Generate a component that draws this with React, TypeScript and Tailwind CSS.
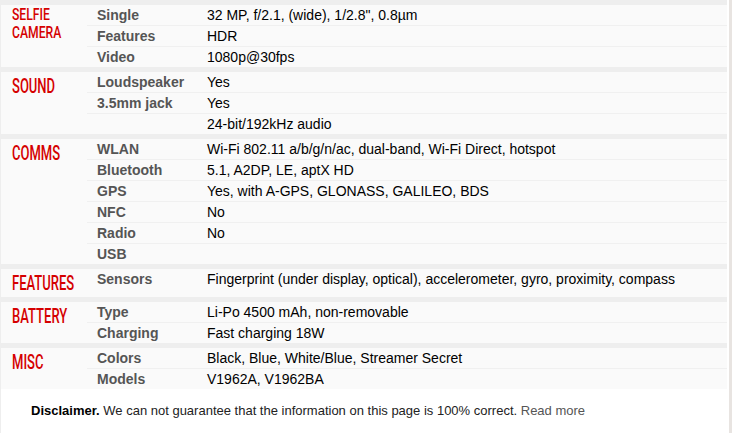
import React from 'react'

type Spec = { title: string; value: string }
type Section = { label: string[]; small?: boolean; specs: Spec[] }

const sections: Section[] = [
    {
        label: ["SELFIE", "CAMERA"],
        small: true,
        specs: [
            { title: "Single", value: "32 MP, f/2.1, (wide), 1/2.8\", 0.8µm" },
            { title: "Features", value: "HDR" },
            { title: "Video", value: "1080p@30fps" },
        ],
    },
    {
        label: ["SOUND"],
        specs: [
            { title: "Loudspeaker", value: "Yes" },
            { title: "3.5mm jack", value: "Yes" },
            { title: "", value: "24-bit/192kHz audio" },
        ],
    },
    {
        label: ["COMMS"],
        specs: [
            { title: "WLAN", value: "Wi-Fi 802.11 a/b/g/n/ac, dual-band, Wi-Fi Direct, hotspot" },
            { title: "Bluetooth", value: "5.1, A2DP, LE, aptX HD" },
            { title: "GPS", value: "Yes, with A-GPS, GLONASS, GALILEO, BDS" },
            { title: "NFC", value: "No" },
            { title: "Radio", value: "No" },
            { title: "USB", value: "" },
        ],
    },
    {
        label: ["FEATURES"],
        specs: [
            { title: "Sensors", value: "Fingerprint (under display, optical), accelerometer, gyro, proximity, compass" },
        ],
    },
    {
        label: ["BATTERY"],
        specs: [
            { title: "Type", value: "Li-Po 4500 mAh, non-removable" },
            { title: "Charging", value: "Fast charging 18W" },
        ],
    },
    {
        label: ["MISC"],
        specs: [
            { title: "Colors", value: "Black, Blue, White/Blue, Streamer Secret" },
            { title: "Models", value: "V1962A, V1962BA" },
        ],
    },
]

const SpecSection = ({ section }: { section: Section }) => {
    return (
        <div className="flex border-t-[5px] border-[#eeeeee] bg-[#fafafa]">
            <div className="w-[86px] shrink-0 pl-[11px] font-['Roboto',sans-serif] font-medium text-[#d50000]">
                {section.small ? (
                    <div className="pt-px text-[16px] leading-[18px]">
                        {section.label.map((line) => (
                            <div key={line} className="origin-left scale-x-[0.76] whitespace-nowrap">{line}</div>
                        ))}
                    </div>
                ) : (
                    <div className="pt-[4px] pb-[4px] text-[21px] leading-5">
                        <div className="origin-left scale-x-[0.62] whitespace-nowrap">{section.label[0]}</div>
                    </div>
                )}
            </div>
            <div className="flex-1">
                {section.specs.map((spec, i) => (
                    <div
                        key={spec.title + i}
                        className={`flex h-5 items-center text-[14px] leading-5 ${i > 0 ? "h-[21px] border-t border-[#f0f0f0]" : ""}`}
                    >
                        <div className="w-[110px] shrink-0 pl-[10px] font-bold text-[#555555]">{spec.title}</div>
                        <div className="pl-[10px] text-black whitespace-nowrap">{spec.value}</div>
                    </div>
                ))}
            </div>
        </div>
    )
}

export default function App() {
    return (
        <div className="flex h-[433px] w-[733px] overflow-hidden bg-white font-['Liberation_Sans',Arial,sans-serif]">
            <div className="w-px shrink-0 bg-[#eeeeee]" />
            <div className="flex w-[726px] shrink-0 flex-col">
                {sections.map((section) => (
                    <SpecSection key={section.label.join(" ")} section={section} />
                ))}
                <div className="flex-1 pl-[30px] pt-[13px] text-[13px] leading-[18px] text-[#222222]">
                    <b className="text-black">Disclaimer.</b> We can not guarantee that the information on this page is 100% correct.{" "}
                    <span className="text-[#555555]">Read more</span>
                </div>
            </div>
            <div className="w-[2px] shrink-0" />
            <div className="w-[3px] shrink-0 bg-[#e8e4e1]" />
        </div>
    )
}
